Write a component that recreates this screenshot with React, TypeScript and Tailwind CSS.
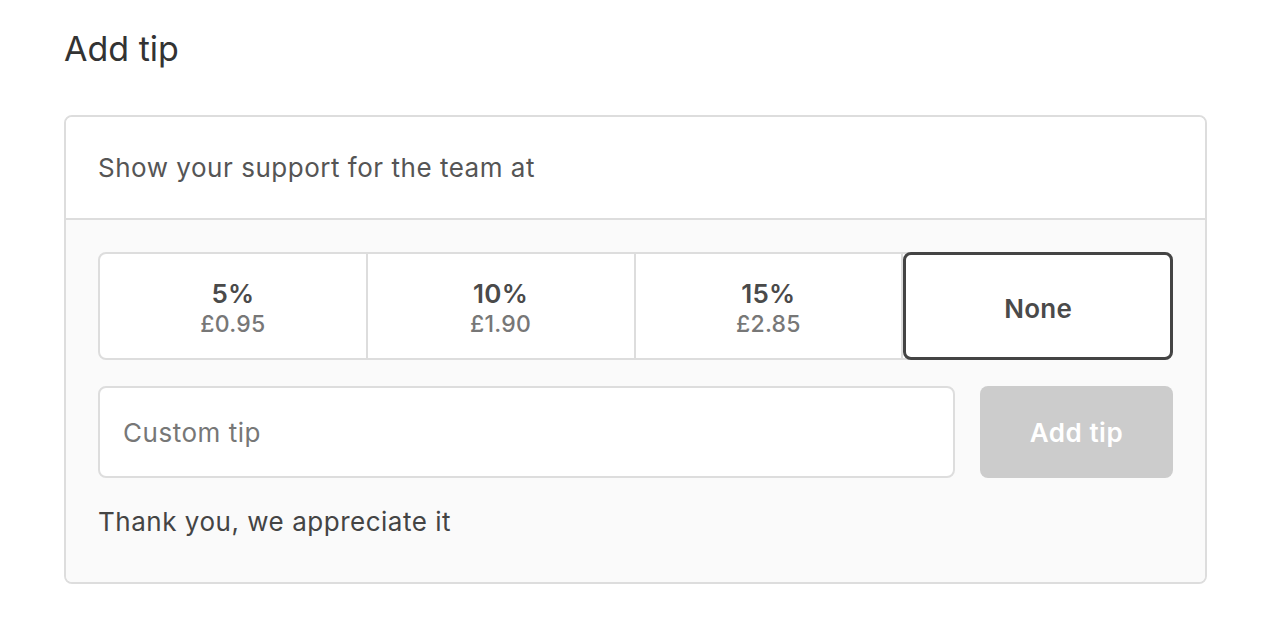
// Tip selector card: heading, preset percentage options, custom amount input.

type TipOption = {
  label: string;
  amount?: string;
};

const options: TipOption[] = [
  { label: "5%", amount: "£0.95" },
  { label: "10%", amount: "£1.90" },
  { label: "15%", amount: "£2.85" },
  { label: "None" },
];

export default function App() {
  const selected = 3;

  return (
    <div
      className="min-h-screen bg-white pl-16 pr-[55px] pt-[24px] text-[#333]"
      style={{ fontFamily: "Inter, 'Noto Sans', sans-serif" }}
    >
      <h1 className="text-[34px] leading-[50px] font-normal text-[#333]">Add tip</h1>

      <div className="mt-[41px] rounded-lg border-2 border-[#dddddd] overflow-hidden">
        {/* Header */}
        <div className="bg-white h-[103px] flex items-center px-[32px] border-b-2 border-[#dddddd]">
          <p className="text-[26px] tracking-[0.02em] text-[#555]">Show your support for the team at</p>
        </div>

        {/* Body */}
        <div className="bg-[#fafafa] px-[32px] pt-[32px] pb-[42px]">
          {/* Segmented options */}
          <div className="grid grid-cols-4 h-[108px] rounded-lg border-2 border-[#dddddd] bg-white">
            {options.map((opt, i) => {
              const isSelected = i === selected;
              return (
                <button
                  key={opt.label}
                  className={
                    isSelected
                      ? "flex flex-col items-center justify-center pt-[5px] rounded-lg border-[3px] border-[#444] -my-[2px] -mr-[2px] bg-white"
                      : "flex flex-col items-center justify-center pt-[5px] border-r-2 border-[#dddddd]"
                  }
                >
                  <span className="text-[26px] leading-[32px] font-semibold tracking-[0.01em] text-[#4a4a4a]">
                    {opt.label}
                  </span>
                  {opt.amount && (
                    <span className="text-[23px] leading-[29px] font-medium tracking-[0.01em] text-[#777]">
                      {opt.amount}
                    </span>
                  )}
                </button>
              );
            })}
          </div>

          {/* Custom tip row */}
          <div className="flex gap-[25px] mt-[26px]">
            <input
              className="flex-1 h-[92px] rounded-lg border-2 border-[#dddddd] bg-white px-[23px] text-[26px] tracking-[0.02em] text-[#333] placeholder:text-[#777] outline-none"
              placeholder="Custom tip"
            />
            <button className="w-[193px] h-[92px] rounded-lg bg-[#cccccc] text-white text-[26px] font-semibold tracking-[0.02em]">
              Add tip
            </button>
          </div>

          <p className="mt-[26px] text-[26px] leading-[36px] tracking-[0.02em] text-[#444]">
            Thank you, we appreciate it
          </p>
        </div>
      </div>
    </div>
  );
}
